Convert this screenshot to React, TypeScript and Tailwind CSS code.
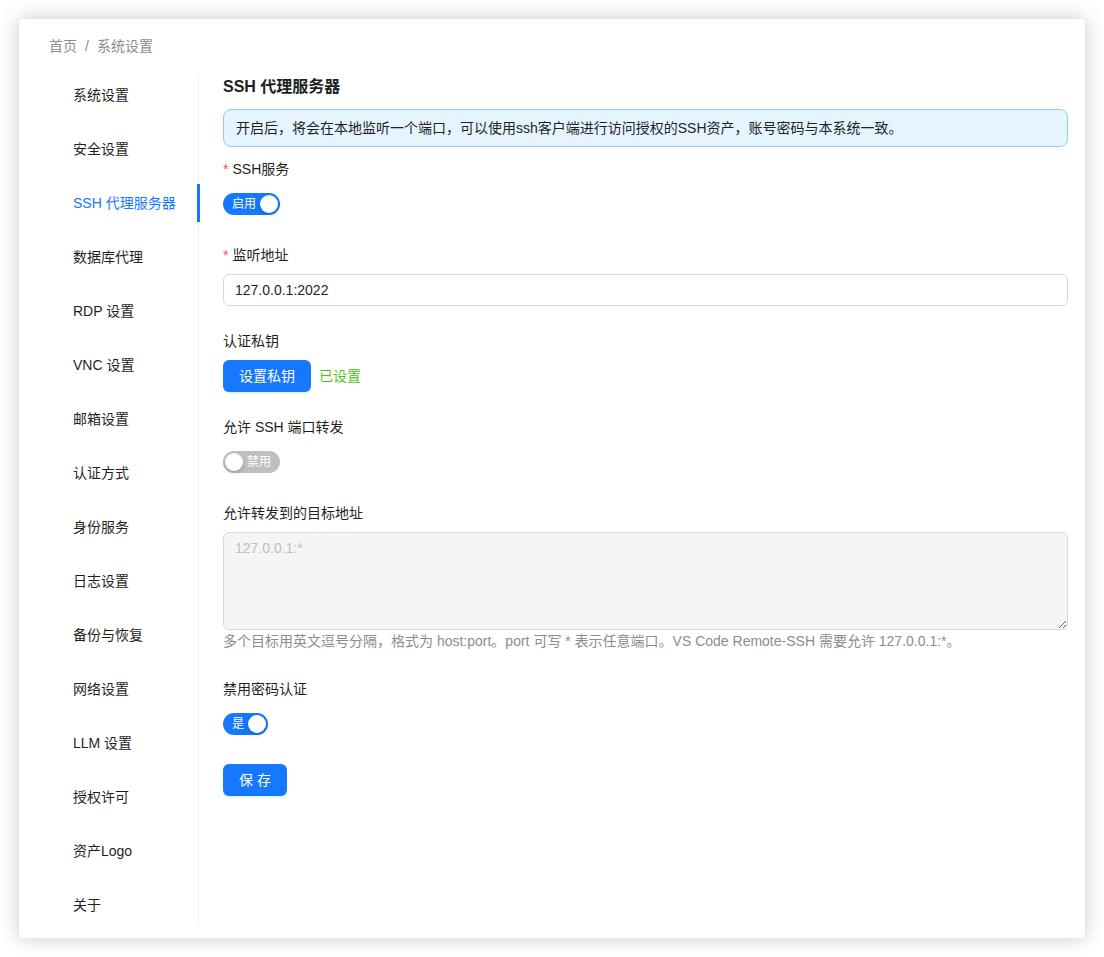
import React from "react";

const menu = [
  "系统设置",
  "安全设置",
  "SSH 代理服务器",
  "数据库代理",
  "RDP 设置",
  "VNC 设置",
  "邮箱设置",
  "认证方式",
  "身份服务",
  "日志设置",
  "备份与恢复",
  "网络设置",
  "LLM 设置",
  "授权许可",
  "资产Logo",
  "关于",
];

function Switch({ on, label }: { on: boolean; label: string }) {
  return (
    <span
      className={`relative inline-flex h-[22px] items-center rounded-full text-[12px] leading-[22px] text-white ${
        on ? "bg-[#1677ff] pl-[9px] pr-[24px]" : "bg-[#bfbfbf] pl-[24px] pr-[9px]"
      }`}
    >
      {label}
      <span
        className={`absolute top-[2px] h-[18px] w-[18px] rounded-full bg-white shadow-[0_2px_4px_rgba(0,35,11,0.2)] ${
          on ? "right-[2px]" : "left-[2px]"
        }`}
      />
    </span>
  );
}

function Label({ text, required }: { text: string; required?: boolean }) {
  return (
    <div className="h-[30px] pb-2 leading-[22px] text-[#1f1f1f]">
      {required && <span className="mr-1 text-[#ff4d4f]">*</span>}
      {text}
    </div>
  );
}

export default function App() {
  const active = "SSH 代理服务器";

  return (
    <div
      className="min-h-screen bg-white p-[19px] text-sm"
      style={{ fontFamily: '"Liberation Sans", "Noto Sans CJK SC", sans-serif' }}
    >
      <div className="rounded-[4px] bg-white pl-[30px] pr-[17px] pt-4 pb-[13px] shadow-[0_0_20px_rgba(0,0,0,0.22)]">
        <div className="mb-[18px] h-[22px] leading-[22px] text-[#8c8c8c]">
          首页
          <span className="mx-2">/</span>
          系统设置
        </div>

        <div className="flex">
          <aside className="flex w-[150px] shrink-0 flex-col gap-[14px] border-r border-[#f0f0f0]">
            {menu.map((item) => (
              <div
                key={item}
                className={`relative flex h-10 items-center pl-6 ${
                  item === active ? "text-[#1677ff]" : "text-[#1f1f1f]"
                }`}
              >
                {item}
                {item === active && (
                  <span className="absolute right-[-2px] top-px h-[38px] w-[3px] bg-[#1677ff]" />
                )}
              </div>
            ))}
          </aside>

          <main className="min-w-0 flex-1 pl-6">
            <h2 className="mb-[10px] text-base font-bold leading-6 text-[#1f1f1f]">SSH 代理服务器</h2>
            <div className="mb-[11px] flex h-[38px] items-center rounded-lg border border-[#91caff] bg-[#e6f4ff] px-3 text-[#1f1f1f]">
              开启后，将会在本地监听一个端口，可以使用ssh客户端进行访问授权的SSH资产，账号密码与本系统一致。
            </div>

            <div className="mb-6">
              <Label text="SSH服务" required />
              <div className="flex h-8 items-center">
                <Switch on label="启用" />
              </div>
            </div>

            <div className="mb-6">
              <Label text="监听地址" required />
              <input
                className="h-8 w-full rounded-md border border-[#d9d9d9] bg-white px-[11px] text-sm text-[#1f1f1f] outline-none"
                defaultValue="127.0.0.1:2022"
              />
            </div>

            <div className="mb-6">
              <Label text="认证私钥" />
              <div className="flex h-8 items-center">
                <button className="h-8 rounded-md bg-[#1677ff] px-[16px] text-white shadow-[0_2px_0_rgba(5,145,255,0.1)]">
                  设置私钥
                </button>
                <span className="ml-2 text-[#52c41a]">已设置</span>
              </div>
            </div>

            <div className="mb-6">
              <Label text="允许 SSH 端口转发" />
              <div className="flex h-8 items-center">
                <Switch on={false} label="禁用" />
              </div>
            </div>

            <div className="mb-[26px]">
              <Label text="允许转发到的目标地址" />
              <textarea
                readOnly
                placeholder="127.0.0.1:*"
                className="block h-[98px] w-full cursor-not-allowed resize-y rounded-md border border-[#d9d9d9] bg-[#f5f5f5] px-[11px] py-1 text-sm leading-[22px] text-[#1f1f1f] outline-none placeholder:text-[#bfbfbf]"
              />
              <div className="leading-[22px] text-[#8c8c8c]">
                多个目标用英文逗号分隔，格式为 host:port。port 可写 * 表示任意端口。VS Code Remote-SSH 需要允许 127.0.0.1:*。
              </div>
            </div>

            <div className="mb-6">
              <Label text="禁用密码认证" />
              <div className="flex h-8 items-center">
                <Switch on label="是" />
              </div>
            </div>

            <button className="h-8 rounded-md bg-[#1677ff] px-[16px] text-white shadow-[0_2px_0_rgba(5,145,255,0.1)]">
              保 存
            </button>
          </main>
        </div>
      </div>
    </div>
  );
}
